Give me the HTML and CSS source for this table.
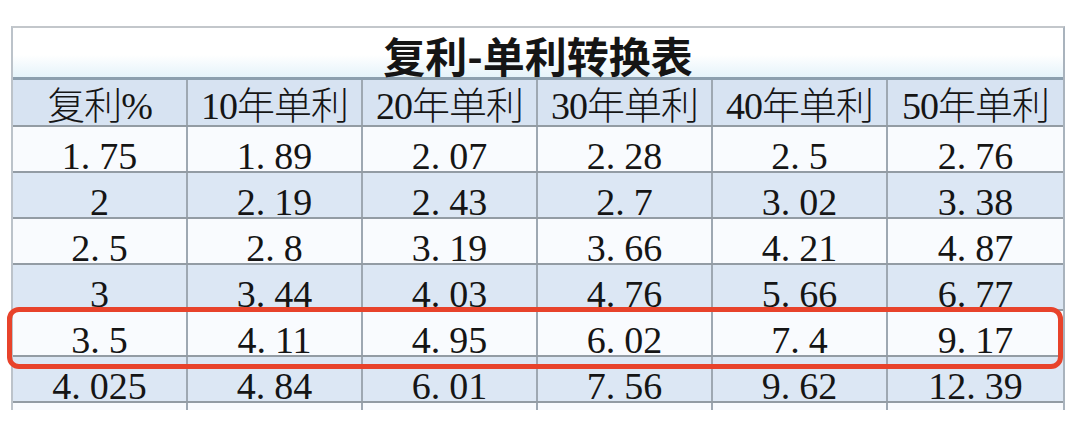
FILE: index.html
```html
<!DOCTYPE html>
<html lang="zh-CN">
<head>
<meta charset="utf-8">
<title>复利-单利转换表</title>
<link rel="stylesheet" href="styles.css">
</head>
<body>
<div class="page">
  <div class="sheet">
    <div class="title">复利-单利转换表</div>
    <div class="row head">
      <div class="cell">复利%</div>
      <div class="cell">10年单利</div>
      <div class="cell">20年单利</div>
      <div class="cell">30年单利</div>
      <div class="cell">40年单利</div>
      <div class="cell">50年单利</div>
    </div>
    <div class="row light">
      <div class="cell">1<span class="d">.</span>75</div>
      <div class="cell">1<span class="d">.</span>89</div>
      <div class="cell">2<span class="d">.</span>07</div>
      <div class="cell">2<span class="d">.</span>28</div>
      <div class="cell">2<span class="d">.</span>5</div>
      <div class="cell">2<span class="d">.</span>76</div>
    </div>
    <div class="row blue">
      <div class="cell">2</div>
      <div class="cell">2<span class="d">.</span>19</div>
      <div class="cell">2<span class="d">.</span>43</div>
      <div class="cell">2<span class="d">.</span>7</div>
      <div class="cell">3<span class="d">.</span>02</div>
      <div class="cell">3<span class="d">.</span>38</div>
    </div>
    <div class="row light">
      <div class="cell">2<span class="d">.</span>5</div>
      <div class="cell">2<span class="d">.</span>8</div>
      <div class="cell">3<span class="d">.</span>19</div>
      <div class="cell">3<span class="d">.</span>66</div>
      <div class="cell">4<span class="d">.</span>21</div>
      <div class="cell">4<span class="d">.</span>87</div>
    </div>
    <div class="row blue">
      <div class="cell">3</div>
      <div class="cell">3<span class="d">.</span>44</div>
      <div class="cell">4<span class="d">.</span>03</div>
      <div class="cell">4<span class="d">.</span>76</div>
      <div class="cell">5<span class="d">.</span>66</div>
      <div class="cell">6<span class="d">.</span>77</div>
    </div>
    <div class="row light">
      <div class="cell">3<span class="d">.</span>5</div>
      <div class="cell">4<span class="d">.</span>11</div>
      <div class="cell">4<span class="d">.</span>95</div>
      <div class="cell">6<span class="d">.</span>02</div>
      <div class="cell">7<span class="d">.</span>4</div>
      <div class="cell">9<span class="d">.</span>17</div>
    </div>
    <div class="row blue">
      <div class="cell">4<span class="d">.</span>025</div>
      <div class="cell">4<span class="d">.</span>84</div>
      <div class="cell">6<span class="d">.</span>01</div>
      <div class="cell">7<span class="d">.</span>56</div>
      <div class="cell">9<span class="d">.</span>62</div>
      <div class="cell">12<span class="d">.</span>39</div>
    </div>
    <div class="row light tail">
      <div class="cell"></div>
      <div class="cell"></div>
      <div class="cell"></div>
      <div class="cell"></div>
      <div class="cell"></div>
      <div class="cell"></div>
    </div>
  </div>
  <div class="highlight"></div>
</div>
</body>
</html>
```
FILE: styles.css
```css
html, body {
  margin: 0;
  padding: 0;
  background: #ffffff;
}

.page {
  position: relative;
  width: 1076px;
  height: 442px;
  padding-top: 26px;
  box-sizing: border-box;
}

.sheet {
  margin-left: 11px;
  width: 1054px;
  box-sizing: border-box;
  border-top: 2px solid #c3c7cb;
  border-left: 2px solid #bcc3ca;
  border-right: 2px solid #a9b3bd;
  color: #151515;
}

.title {
  height: 52px;
  box-sizing: border-box;
  padding-top: 6px;
  border-bottom: 3px solid #8c9fae;
  background: linear-gradient(to bottom, #ffffff 0%, #ffffff 55%, #e5f3fa 100%);
  text-align: center;
  font-family: "Noto Sans CJK SC", sans-serif;
  font-weight: 700;
  font-size: 42px;
  line-height: 42px;
}

.row {
  display: grid;
  grid-template-columns: repeat(6, 1fr);
  border-bottom: 2px solid #939ca4;
}

.cell {
  height: 44px;
  box-sizing: border-box;
  border-right: 2px solid #9ea8b2;
  text-align: center;
  white-space: nowrap;
  font-family: "Liberation Serif", "Noto Sans CJK SC", serif;
  font-size: 38px;
  line-height: 30px;
  padding-top: 14px;
}

.cell:last-child {
  border-right: none;
}

.head {
  background: #d7e3f2;
}

.head .cell {
  height: 45px;
  line-height: 38px;
  padding-top: 7px;
  letter-spacing: -1px;
  font-weight: 300;
}

.light {
  background: #f9fbfe;
}

.blue {
  background: #dce7f4;
}

.tail {
  border-bottom: none;
}

.tail .cell {
  height: 7px;
  padding: 0;
}

.d {
  letter-spacing: 9px;
}

.highlight {
  position: absolute;
  left: 7px;
  top: 307px;
  width: 1056px;
  height: 62px;
  box-sizing: border-box;
  border: 5px solid #e8432b;
  border-radius: 12px;
}
```
